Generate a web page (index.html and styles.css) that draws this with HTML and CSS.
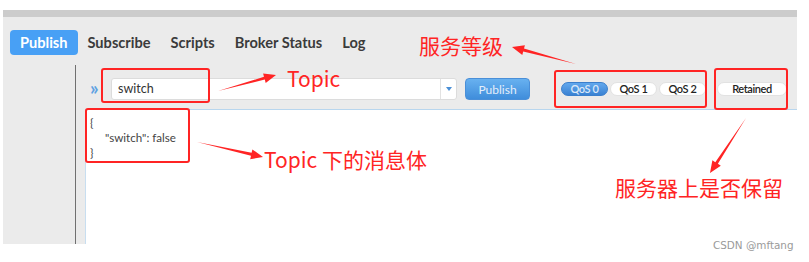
FILE: index.html
```html
<!DOCTYPE html>
<html lang="zh-CN">
<head>
  <meta charset="UTF-8" />
  <title>MQTT.fx Publish</title>
  <link rel="stylesheet" href="styles.css">
</head>
<body>
  <div class="window">
    <div class="titlebar"></div>
    <div class="app">
      <nav class="tabs">
        <a class="tab active">Publish</a>
        <a class="tab">Subscribe</a>
        <a class="tab">Scripts</a>
        <a class="tab">Broker Status</a>
        <a class="tab">Log</a>
      </nav>
      <div class="main">
        <div class="sidebar"></div>
        <div class="content">
          <div class="toolbar">
            <span class="chevron">»</span>
            <div class="topic-field">
              <span class="topic-value">switch</span>
              <span class="drop"><i></i></span>
            </div>
            <button class="publish-btn">Publish</button>
            <div class="qos">
              <span class="pill active">QoS 0</span>
              <span class="pill">QoS 1</span>
              <span class="pill">QoS 2</span>
            </div>
            <span class="pill retained">Retained</span>
          </div>
          <div class="editor">
            <div>{</div>
            <div class="indent">"switch": false</div>
            <div>}</div>
          </div>
        </div>
      </div>
    </div>
  </div>

  <!-- annotations drawn on top of the screenshot -->
  <svg class="marks" width="809" height="262" viewBox="0 0 809 262">
    <g fill="none" stroke="#ff2424" stroke-width="2">
      <rect x="102" y="69" width="107" height="33" rx="2" />
      <rect x="86" y="109" width="103" height="53" rx="2" />
      <rect x="555" y="71" width="151" height="36" rx="2" />
      <rect x="715" y="69" width="72" height="40" rx="2" />
    </g>
    <g fill="#ff2424">
      <polygon points="218,91 264.8,79.6 265.7,83 276,75 263.1,73.4 264,76.8" />
      <polygon points="197,142 251,155.8 250.2,159.2 263,157 252.4,149.4 251.6,152.8" />
      <polygon points="576,64 524,48.6 524.9,45.3 512,47 522.3,54.9 523.2,51.6" />
      <polygon points="746,118 715.3,162.2 712.4,160.3 710,173 720.8,165.7 717.9,163.8" />
    </g>
  </svg>
  <span class="note note-qos">服务等级</span>
  <span class="note note-topic">Topic</span>
  <span class="note note-body">Topic 下的消息体</span>
  <span class="note note-retain">服务器上是否保留</span>
  <span class="watermark">CSDN @mftang</span>
</body>
</html>
```

FILE: styles.css
```css
body {
  margin: 0;
  background: #fff;
  font-family: Lato, "Noto Sans", sans-serif;
  position: relative;
  width: 809px;
  height: 262px;
  overflow: hidden;
}

.window {
  margin: 10px 0 0 3px;
  width: 794px;
}

.titlebar {
  height: 7px;
  background: #cccccc;
}

.app {
  background: #ebebeb;
  height: 227px;
  display: flex;
  flex-direction: column;
}

.tabs {
  display: flex;
  padding: 13px 0 0 7px;
}

.tab {
  padding: 0 10px;
  height: 25px;
  line-height: 25px;
  font-size: 14.6px;
  font-weight: bold;
  color: #3b3b3b;
  border-radius: 4px;
}

.tab.active {
  background: #48a0f5;
  color: #fff;
}

.main {
  display: flex;
  flex: 1;
  margin-top: 10px;
}

.sidebar {
  width: 72px;
  border-right: 1px solid #707070;
}

.content {
  flex: 1;
  display: flex;
  flex-direction: column;
}

.toolbar {
  display: flex;
  align-items: center;
  padding: 13px 0 9px 14px;
}

.chevron {
  color: #5ea2e2;
  font-size: 19px;
  font-weight: bold;
  line-height: 17px;
  height: 21px;
  width: 21px;
}

.topic-field {
  width: 344px;
  height: 20px;
  display: flex;
  background: #fff;
  border: 1px solid #dcdcdc;
  border-radius: 3px;
}

.topic-value {
  flex: 1;
  padding-left: 6px;
  font-size: 12.5px;
  line-height: 20px;
  color: #333;
}

.drop {
  width: 15px;
  border-left: 1px solid #e2e2e2;
  display: flex;
  align-items: center;
  justify-content: center;
}

.drop i {
  border-left: 3px solid transparent;
  border-right: 3px solid transparent;
  border-top: 4px solid #4a8fd6;
}

.publish-btn {
  margin-left: 8px;
  width: 65px;
  height: 22px;
  border: 1px solid #4a8fd8;
  border-radius: 4px;
  background: linear-gradient(#68b1f0, #3f8ddb);
  color: #e4eefa;
  font-family: Lato, "Noto Sans", sans-serif;
  font-size: 12px;
  padding: 0;
}

.qos {
  display: flex;
  gap: 2px;
  margin-left: 31px;
}

.pill {
  box-sizing: border-box;
  width: 47px;
  height: 14px;
  line-height: 12px;
  text-align: center;
  font-size: 11px;
  font-weight: 600;
  letter-spacing: -0.4px;
  color: #222;
  background: #fff;
  border: 1px solid #e2e2e2;
  border-radius: 8px;
}

.pill.active {
  background: linear-gradient(#62a8ed, #3a82d3);
  border-color: #3b7fcc;
  color: #dbe8f8;
}

.pill.retained {
  width: 70px;
  margin-left: 11px;
}

.editor {
  flex: 1;
  margin-left: 9px;
  padding: 5px 0 0 4px;
  background: #fff;
  border-top: 1px solid #b8d6ee;
  border-left: 1px solid #c8def0;
  font-size: 11.6px;
  line-height: 15px;
  color: #444;
}

.editor .indent {
  padding-left: 15px;
}

.marks {
  position: absolute;
  left: 0;
  top: 0;
}

.note {
  position: absolute;
  color: #ff2424;
  font-family: "Noto Sans CJK SC", sans-serif;
  font-size: 21px;
  line-height: 1;
  white-space: nowrap;
}

.note-qos {
  left: 419px;
  top: 35px;
}

.note-topic {
  left: 287px;
  top: 68px;
}

.note-body {
  left: 264px;
  top: 149px;
}

.note-retain {
  left: 615px;
  top: 177px;
}

.watermark {
  position: absolute;
  left: 713px;
  top: 239px;
  font-family: "DejaVu Sans", sans-serif;
  font-size: 10.4px;
  color: #9a9a9a;
}
```
